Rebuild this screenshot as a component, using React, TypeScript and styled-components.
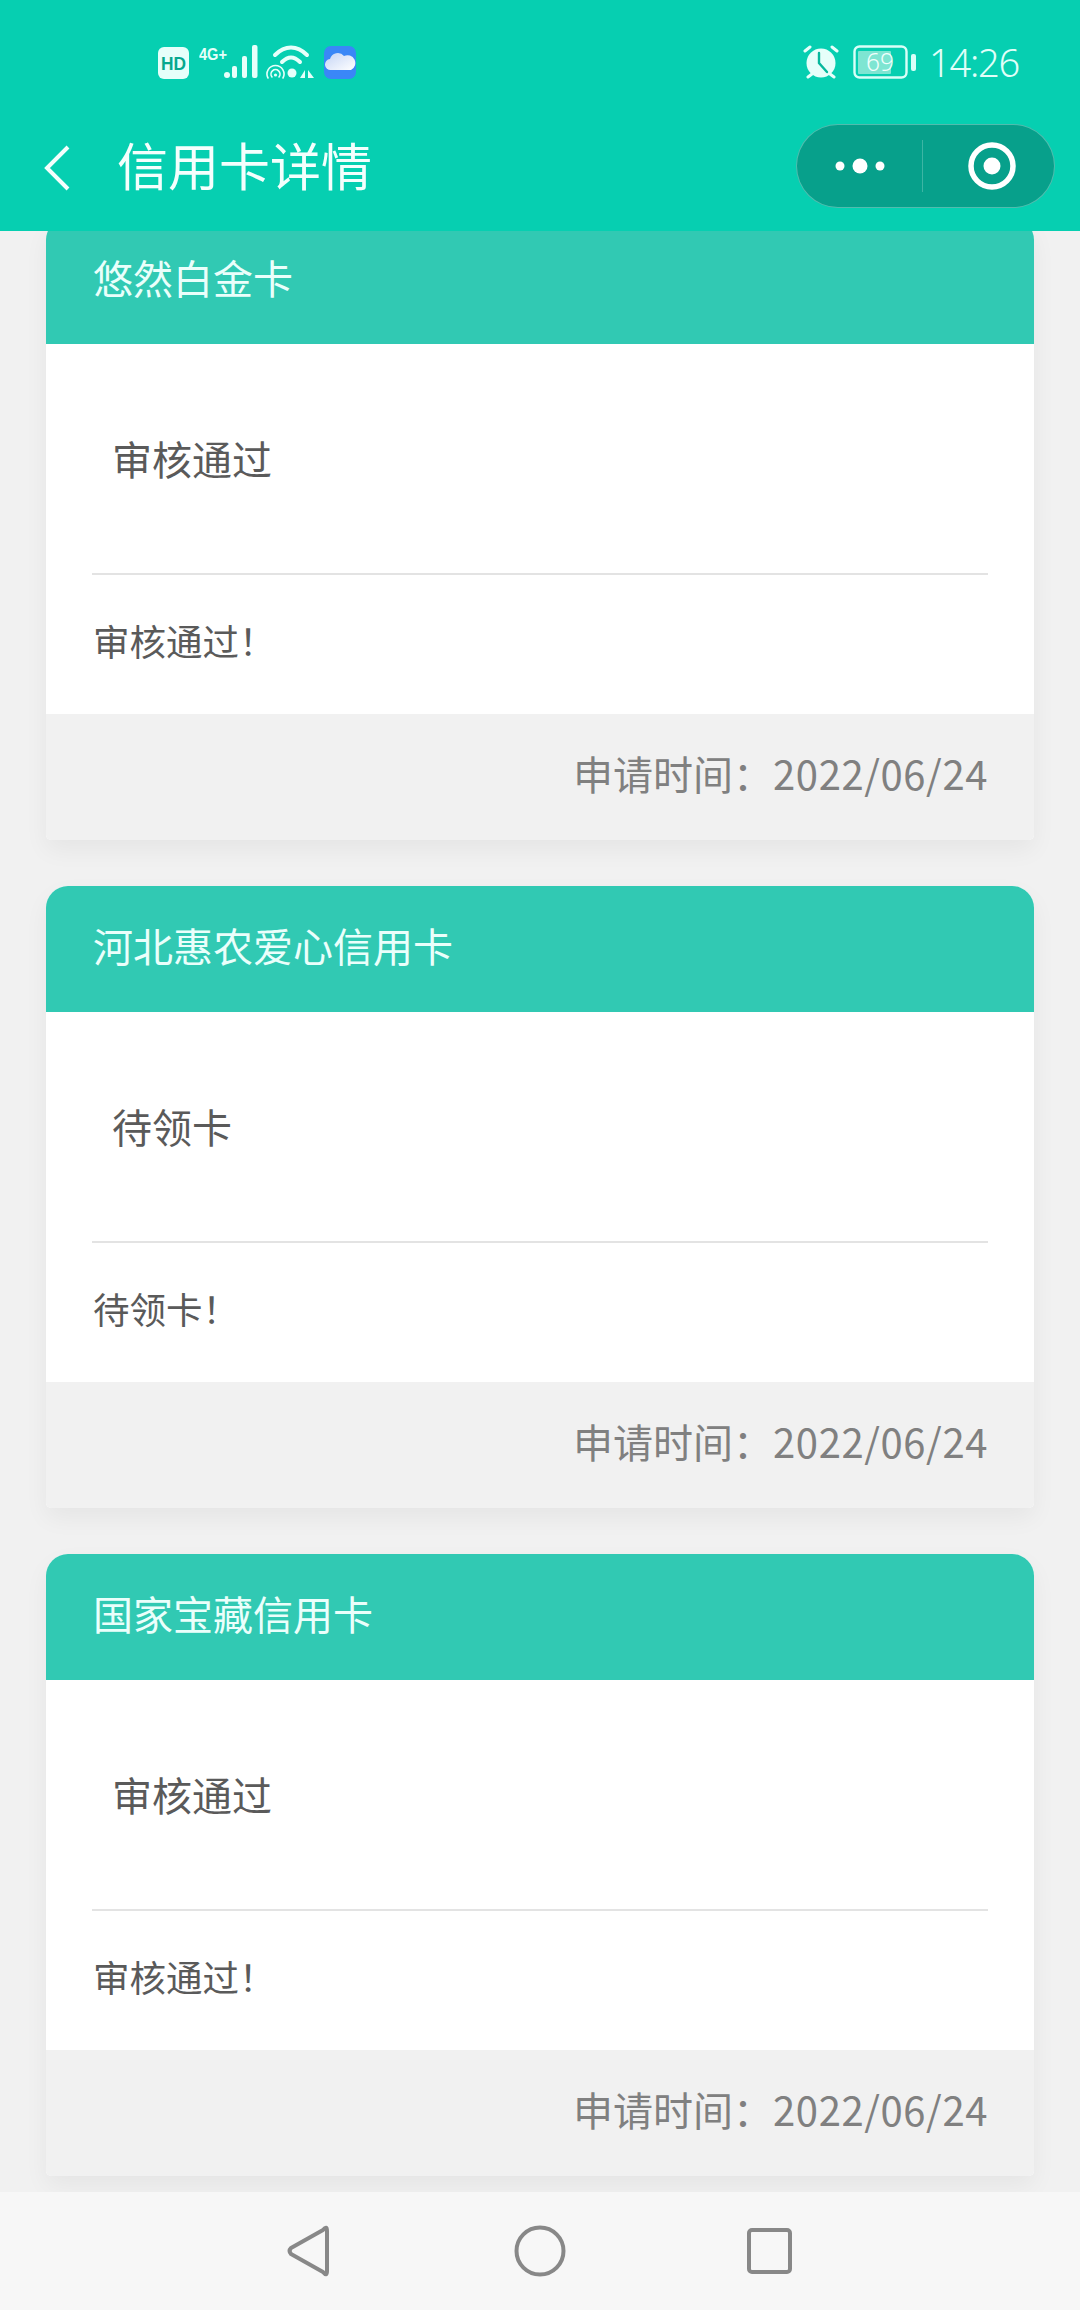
import React from 'react';
import styled, { createGlobalStyle } from 'styled-components';

const Global = createGlobalStyle`
  html, body { margin: 0; padding: 0; background: #f1f1f1; }
  body { font-family: "Noto Sans CJK SC", "Noto Sans", sans-serif; }
`;

const Page = styled.div`
  width: 1080px;
  height: 2310px;
  display: flex;
  flex-direction: column;
  overflow: hidden;
  background: #f1f1f1;
`;

const TopBar = styled.header`
  height: 231px;
  flex: none;
  background: #06cfb1;
  display: flex;
  flex-direction: column;
  position: relative;
  z-index: 2;
`;

const StatusBar = styled.div`
  height: 124px;
  flex: none;
  box-sizing: border-box;
  padding: 45px 61px 0 158px;
  display: flex;
  align-items: flex-start;
  justify-content: space-between;
  color: #e0fff9;
`;

const StatusGroup = styled.div`
  display: flex;
  align-items: center;
  height: 34px;
`;

const Time = styled.span`
  font-family: "Noto Sans", sans-serif;
  font-weight: 300;
  font-size: 38px;
  line-height: 34px;
  margin-left: 13px;
  letter-spacing: -1.2px;
`;

const NavRow = styled.div`
  flex: 1;
  display: flex;
  align-items: flex-start;
  padding: 0 25px 0 44px;
`;

const BackIcon = styled.svg`
  width: 26px;
  height: 46px;
  margin-top: 21px;
  flex: none;
`;

const Title = styled.h1`
  margin: 0 0 0 47px;
  font-size: 51px;
  line-height: 70px;
  padding-top: 5px;
  font-weight: 400;
  color: #f4fffd;
  flex: 1;
`;

const Capsule = styled.div`
  width: 259px;
  height: 84px;
  box-sizing: border-box;
  border: 1px solid rgba(255, 255, 255, 0.3);
  border-radius: 42px;
  background: #07a08b;
  display: flex;
  align-items: center;
`;

const CapsuleHalf = styled.div<{ $shift?: number }>`
  flex: 1;
  height: 52px;
  box-sizing: border-box;
  padding-left: ${(p) => p.$shift ?? 0}px;
  display: flex;
  align-items: center;
  justify-content: center;
`;

const CapsuleDivider = styled.div`
  width: 1px;
  height: 52px;
  background: rgba(255, 255, 255, 0.22);
  flex: none;
`;

const Content = styled.main`
  flex: 1;
  min-height: 0;
  overflow: hidden;
`;

const CardList = styled.div`
  margin-top: -13.2px;
  padding: 0 46px;
  display: flex;
  flex-direction: column;
  gap: 45.5px;
`;

const Card = styled.section`
  height: 622.5px;
  display: flex;
  flex-direction: column;
  background: #fff;
  border-radius: 22px 22px 5px 5px;
  box-shadow: 0 10px 24px rgba(0, 0, 0, 0.05);
`;

const CardHeader = styled.div`
  height: 126.5px;
  flex: none;
  box-sizing: border-box;
  padding: 0 0 8px 47px;
  display: flex;
  align-items: center;
  background: #31c9b3;
  border-radius: 22px 22px 0 0;
  color: #eafffb;
  font-size: 40px;
`;

const StatusRow = styled.div`
  height: 230.7px;
  flex: none;
  box-sizing: border-box;
  margin: 0 46px;
  padding: 0 0 1px 20px;
  display: flex;
  align-items: center;
  border-bottom: 2px solid #e3e3e3;
  color: #5a5a5a;
  font-size: 40px;
`;

const Message = styled.div`
  flex: 1;
  padding: 0 47px 7px;
  display: flex;
  align-items: center;
  color: #5a5a5a;
  font-size: 36.5px;
`;

const CardFooter = styled.div`
  height: 126.5px;
  flex: none;
  box-sizing: border-box;
  padding: 0 46px 8px 0;
  display: flex;
  align-items: center;
  justify-content: flex-end;
  background: #f1f1f1;
  border-radius: 0 0 5px 5px;
  color: #808080;
  font-size: 40px;
`;

const DateText = styled.span`
  letter-spacing: 0.6px;
`;

const BottomNav = styled.nav`
  height: 118px;
  flex: none;
  background: #f7f7f7;
  position: relative;
  z-index: 2;
  display: flex;
  align-items: center;
  justify-content: center;
`;

const NavIcons = styled.svg`
  width: 520px;
  height: 118px;
  display: block;
`;

const HdIcon = () => (
  <svg width="32" height="34" viewBox="0 0 32 34">
    <rect x="0" y="2" width="31" height="32" rx="6" fill="#e6fffa" />
    <text x="15.5" y="25" textAnchor="middle" fontFamily="Liberation Sans, sans-serif" fontWeight="700" fontSize="18" fill="#06a88f" textLength="25" lengthAdjust="spacingAndGlyphs">HD</text>
  </svg>
);

const SignalIcon = () => (
  <svg width="60" height="34" viewBox="0 0 60 34" style={{ marginLeft: 9 }}>
    <text x="0" y="15" fontFamily="Liberation Sans, sans-serif" fontWeight="700" fontSize="17" fill="#e6fffa" textLength="28" lengthAdjust="spacingAndGlyphs">4G+</text>
    <circle cx="28" cy="30" r="3" fill="#e6fffa" />
    <rect x="33" y="21" width="5" height="12" rx="2" fill="#e6fffa" />
    <rect x="43" y="11" width="5" height="22" rx="2" fill="#e6fffa" />
    <rect x="53" y="0" width="5.5" height="33" rx="2" fill="#e6fffa" />
  </svg>
);

const WifiIcon = () => (
  <svg width="50" height="34" viewBox="0 0 50 34" style={{ marginLeft: 7 }}>
    <g fill="none" stroke="#e6fffa" strokeLinecap="round">
      <path d="M9 10 C19 0 31 0 41 10" strokeWidth="4" />
      <path d="M16 17 C22 11 28 11 34 17" strokeWidth="4" />
      <path d="M2 33 A8.5 8.5 0 1 1 17 33" strokeWidth="1.6" />
      <path d="M6 32 A4.5 4.5 0 1 1 13 32" strokeWidth="1.6" />
    </g>
    <circle cx="9.5" cy="30" r="1.6" fill="#e6fffa" />
    <circle cx="26" cy="28" r="4.5" fill="#e6fffa" />
    <path d="M39 25 V33 H34 Z M42 25 L48 33 H42 Z" fill="#e6fffa" />
  </svg>
);

const CloudIcon = () => (
  <svg width="34" height="34" viewBox="0 0 34 34" style={{ marginLeft: 7 }}>
    <defs>
      <linearGradient id="cloudFill" x1="0" y1="0" x2="1" y2="1">
        <stop offset="0" stopColor="#c4d4f5" />
        <stop offset="1" stopColor="#ffffff" />
      </linearGradient>
    </defs>
    <rect x="1" y="1" width="32" height="33" rx="7" fill="#3a87f7" />
    <path d="M8 25 a5.5 5.5 0 0 1 -1 -11 a8 8 0 0 1 14 -3 a7 7 0 0 1 7 14 z" fill="url(#cloudFill)" />
  </svg>
);

const AlarmIcon = () => (
  <svg width="36" height="34" viewBox="0 0 36 34">
    <circle cx="18" cy="18" r="14.5" fill="#e6fffa" />
    <path d="M16 8 V18 L24 27" fill="none" stroke="#07b89d" strokeWidth="2.4" strokeLinecap="round" />
    <path d="M2 6 L7 2 M34 6 L29 2 M5 32 L9 29 M31 32 L27 29" stroke="#e6fffa" strokeWidth="3" strokeLinecap="round" />
  </svg>
);

const BatteryIcon = () => (
  <svg width="63" height="34" viewBox="0 0 63 34" style={{ marginLeft: 14 }}>
    <rect x="1.5" y="1.5" width="52" height="31" rx="5" fill="none" stroke="#d9fff8" strokeWidth="2.4" />
    <rect x="5" y="6" width="33" height="23" rx="1" fill="#7ee5d2" />
    <text x="27" y="26" textAnchor="middle" fontFamily="Noto Sans, sans-serif" fontWeight="300" fontSize="25" fill="#f0fffc" textLength="28" lengthAdjust="spacingAndGlyphs">69</text>
    <rect x="58" y="9" width="5" height="17" rx="2" fill="#d9fff8" />
  </svg>
);

const MoreDots = () => (
  <svg width="60" height="20" viewBox="0 0 60 20">
    <circle cx="10" cy="10" r="4.5" fill="#fff" />
    <circle cx="30" cy="10" r="7.5" fill="#fff" />
    <circle cx="50" cy="10" r="4.5" fill="#fff" />
  </svg>
);

const RecordRing = () => (
  <svg width="48" height="48" viewBox="0 0 48 48">
    <circle cx="24" cy="24" r="21" fill="none" stroke="#fff" strokeWidth="5.5" />
    <circle cx="24" cy="24" r="8.5" fill="#fff" />
  </svg>
);

type CardData = { title: string; status: string; message: string; date: string };

const cards: CardData[] = [
  { title: '悠然白金卡', status: '审核通过', message: '审核通过！', date: '2022/06/24' },
  { title: '河北惠农爱心信用卡', status: '待领卡', message: '待领卡！', date: '2022/06/24' },
  { title: '国家宝藏信用卡', status: '审核通过', message: '审核通过！', date: '2022/06/24' },
];

export default function App() {
  return (
    <Page>
      <Global />
      <TopBar>
        <StatusBar>
          <StatusGroup>
            <HdIcon />
            <SignalIcon />
            <WifiIcon />
            <CloudIcon />
          </StatusGroup>
          <StatusGroup>
            <AlarmIcon />
            <BatteryIcon />
            <Time>14:26</Time>
          </StatusGroup>
        </StatusBar>
        <NavRow>
          <BackIcon viewBox="0 0 26 46">
            <path d="M24 2 L3 23 L24 44" fill="none" stroke="#f4fffd" strokeWidth="4" />
          </BackIcon>
          <Title>信用卡详情</Title>
          <Capsule>
            <CapsuleHalf><MoreDots /></CapsuleHalf>
            <CapsuleDivider />
            <CapsuleHalf $shift={6}><RecordRing /></CapsuleHalf>
          </Capsule>
        </NavRow>
      </TopBar>
      <Content>
        <CardList>
          {cards.map((card) => (
            <Card key={card.title}>
              <CardHeader>{card.title}</CardHeader>
              <StatusRow>{card.status}</StatusRow>
              <Message>{card.message}</Message>
              <CardFooter>申请时间：<DateText>{card.date}</DateText></CardFooter>
            </Card>
          ))}
        </CardList>
      </Content>
      <BottomNav>
        <NavIcons viewBox="0 0 520 118">
          <g fill="none" stroke="#888" strokeWidth="4" strokeLinejoin="round">
            <path d="M47 39 Q47 33 43 38 L11 56 Q8 59 11 62 L43 80 Q47 85 47 79 Z" />
            <circle cx="260" cy="59" r="23.5" />
            <rect x="469" y="38" width="41" height="42" rx="3" />
          </g>
        </NavIcons>
      </BottomNav>
    </Page>
  );
}
